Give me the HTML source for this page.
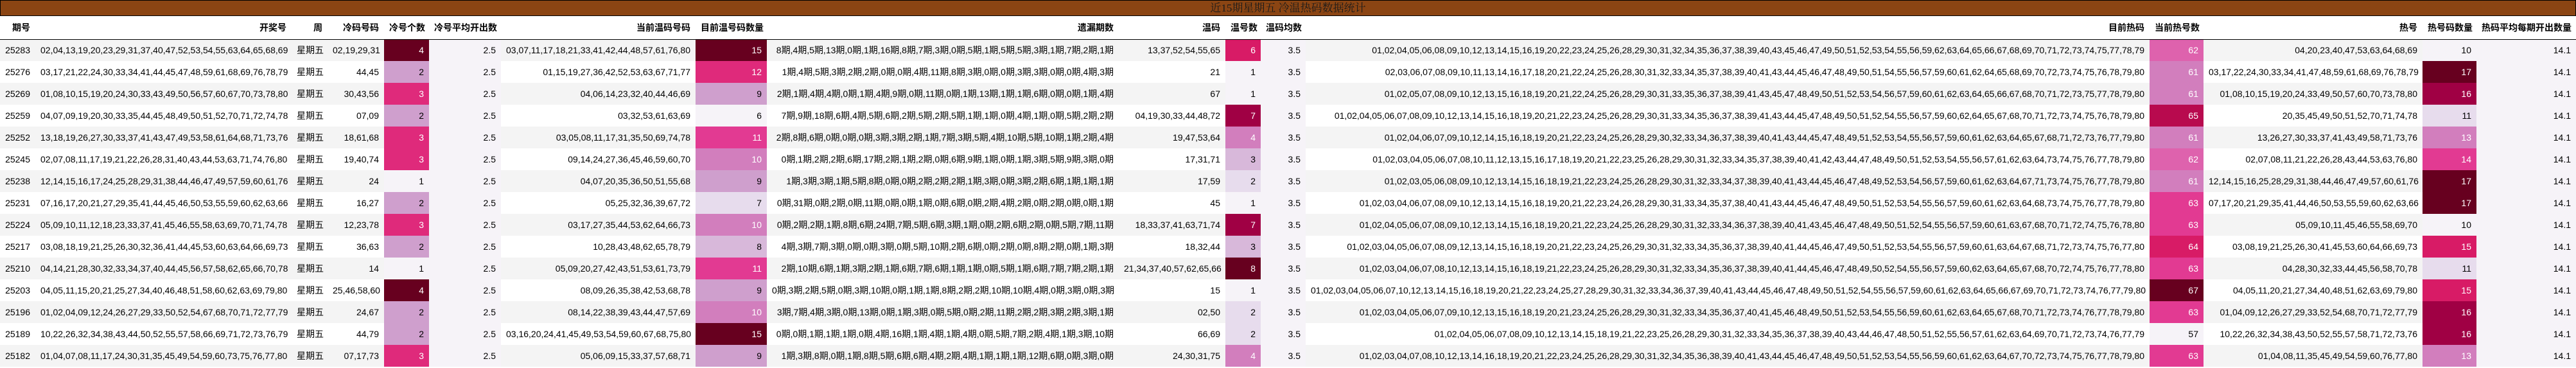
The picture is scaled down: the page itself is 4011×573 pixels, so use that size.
<!DOCTYPE html>
<html><head><meta charset="utf-8">
<style>
*{box-sizing:border-box;margin:0;padding:0}
body{width:4011px;height:573px;background:#fff;font-family:"Liberation Sans","Noto Sans CJK SC",sans-serif;font-size:14px;color:#000;overflow:hidden}
.title{height:25px;background:#8B4513;border:1px solid #000;text-align:center;font-size:17px;line-height:23px;color:#1a1a1a;font-family:"Liberation Serif","Noto Serif CJK SC",serif}
table{border-collapse:collapse;table-layout:fixed;width:4011px}
td,th{height:34px;padding:0 8px;text-align:right;white-space:nowrap;overflow:hidden}
th{height:36px;font-weight:bold;border-bottom:1px solid #000}
tbody tr:nth-child(odd){background:#f4f4f4}
tbody tr:nth-child(even){background:#fff}
.d0{background:#f6f3f8}
.d1{background:#e7dced}
.d2{background:#d8b8da}
.d3{background:#cf9fcd}
.d4{background:#d27ebd;color:#fff}
.d5{background:#de62ad;color:#fff}
.d6{background:#e23a92;color:#fff}
.d7{background:#df2a7b;color:#fff}
.d8{background:#d81b66;color:#fff}
.d9{background:#b80a4e;color:#fff}
.d10{background:#a00044;color:#fff}
.d11{background:#67001f;color:#fff}
</style></head><body>
<div class="title">近15期星期五 冷温热码数据统计</div>
<table>
<colgroup><col style="width:55px"><col style="width:399px"><col style="width:56px"><col style="width:88px"><col style="width:70px"><col style="width:112px"><col style="width:303px"><col style="width:111px"><col style="width:548px"><col style="width:166px"><col style="width:55px"><col style="width:70px"><col style="width:1314px"><col style="width:84px"><col style="width:341px"><col style="width:84px"><col style="width:155px"></colgroup>
<thead><tr><th>期号</th><th>开奖号</th><th>周</th><th>冷码号码</th><th>冷号个数</th><th>冷号平均开出数</th><th>当前温码号码</th><th>目前温号码数量</th><th>遗漏期数</th><th>温码</th><th>温号数</th><th>温码均数</th><th>目前热码</th><th>当前热号数</th><th>热号</th><th>热号码数量</th><th>热码平均每期开出数量</th></tr></thead>
<tbody>
<tr><td>25283</td><td>02,04,13,19,20,23,29,31,37,40,47,52,53,54,55,63,64,65,68,69</td><td>星期五</td><td>02,19,29,31</td><td class="d11">4</td><td class="d0">2.5</td><td>03,07,11,17,18,21,33,41,42,44,48,57,61,76,80</td><td class="d11">15</td><td>8期,4期,5期,13期,0期,1期,16期,8期,7期,3期,0期,5期,1期,5期,5期,3期,1期,7期,2期,1期</td><td>13,37,52,54,55,65</td><td class="d8">6</td><td class="d0">3.5</td><td>01,02,04,05,06,08,09,10,12,13,14,15,16,19,20,22,23,24,25,26,28,29,30,31,32,34,35,36,37,38,39,40,43,45,46,47,49,50,51,52,53,54,55,56,59,62,63,64,65,66,67,68,69,70,71,72,73,74,75,77,78,79</td><td class="d5">62</td><td>04,20,23,40,47,53,63,64,68,69</td><td class="d0">10</td><td class="d0">14.1</td></tr>
<tr><td>25276</td><td>03,17,21,22,24,30,33,34,41,44,45,47,48,59,61,68,69,76,78,79</td><td>星期五</td><td>44,45</td><td class="d3">2</td><td class="d0">2.5</td><td>01,15,19,27,36,42,52,53,63,67,71,77</td><td class="d7">12</td><td>1期,4期,5期,3期,2期,2期,0期,0期,4期,11期,8期,3期,0期,0期,3期,3期,0期,0期,4期,3期</td><td>21</td><td class="d0">1</td><td class="d0">3.5</td><td>02,03,06,07,08,09,10,11,13,14,16,17,18,20,21,22,24,25,26,28,30,31,32,33,34,35,37,38,39,40,41,43,44,45,46,47,48,49,50,51,54,55,56,57,59,60,61,62,64,65,68,69,70,72,73,74,75,76,78,79,80</td><td class="d4">61</td><td>03,17,22,24,30,33,34,41,47,48,59,61,68,69,76,78,79</td><td class="d11">17</td><td class="d0">14.1</td></tr>
<tr><td>25269</td><td>01,08,10,15,19,20,24,30,33,43,49,50,56,57,60,67,70,73,78,80</td><td>星期五</td><td>30,43,56</td><td class="d7">3</td><td class="d0">2.5</td><td>04,06,14,23,32,40,44,46,69</td><td class="d3">9</td><td>2期,1期,4期,4期,0期,1期,4期,9期,0期,11期,0期,1期,13期,1期,1期,6期,0期,0期,1期,4期</td><td>67</td><td class="d0">1</td><td class="d0">3.5</td><td>01,02,05,07,08,09,10,12,13,15,16,18,19,20,21,22,24,25,26,28,29,30,31,33,35,36,37,38,39,41,43,45,47,48,49,50,51,52,53,54,56,57,59,60,61,62,63,64,65,66,67,68,70,71,72,73,75,77,78,79,80</td><td class="d4">61</td><td>01,08,10,15,19,20,24,33,49,50,57,60,70,73,78,80</td><td class="d10">16</td><td class="d0">14.1</td></tr>
<tr><td>25259</td><td>04,07,09,19,20,30,33,35,44,45,48,49,50,51,52,70,71,72,74,78</td><td>星期五</td><td>07,09</td><td class="d3">2</td><td class="d0">2.5</td><td>03,32,53,61,63,69</td><td class="d0">6</td><td>7期,9期,18期,6期,4期,5期,6期,2期,5期,2期,5期,1期,1期,0期,4期,1期,0期,5期,2期,2期</td><td>04,19,30,33,44,48,72</td><td class="d10">7</td><td class="d0">3.5</td><td>01,02,04,05,06,07,08,09,10,12,13,14,15,16,18,19,20,21,22,23,24,25,26,28,29,30,31,33,34,35,36,37,38,39,41,43,44,45,47,48,49,50,51,52,54,55,56,57,59,60,62,64,65,67,68,70,71,72,73,74,75,76,78,79,80</td><td class="d9">65</td><td>20,35,45,49,50,51,52,70,71,74,78</td><td class="d1">11</td><td class="d0">14.1</td></tr>
<tr><td>25252</td><td>13,18,19,26,27,30,33,37,41,43,47,49,53,58,61,64,68,71,73,76</td><td>星期五</td><td>18,61,68</td><td class="d7">3</td><td class="d0">2.5</td><td>03,05,08,11,17,31,35,50,69,74,78</td><td class="d6">11</td><td>2期,8期,6期,0期,0期,0期,3期,3期,2期,1期,7期,3期,5期,4期,10期,5期,10期,1期,2期,4期</td><td>19,47,53,64</td><td class="d4">4</td><td class="d0">3.5</td><td>01,02,04,06,07,09,10,12,14,15,16,18,19,20,21,22,23,24,25,26,28,29,30,32,33,34,36,37,38,39,40,41,43,44,45,47,48,49,51,52,53,54,55,56,57,59,60,61,62,63,64,65,67,68,71,72,73,76,77,79,80</td><td class="d4">61</td><td>13,26,27,30,33,37,41,43,49,58,71,73,76</td><td class="d4">13</td><td class="d0">14.1</td></tr>
<tr><td>25245</td><td>02,07,08,11,17,19,21,22,26,28,31,40,43,44,53,63,71,74,76,80</td><td>星期五</td><td>19,40,74</td><td class="d7">3</td><td class="d0">2.5</td><td>09,14,24,27,36,45,46,59,60,70</td><td class="d4">10</td><td>0期,1期,2期,2期,6期,17期,2期,1期,2期,0期,6期,9期,1期,0期,1期,3期,5期,9期,3期,0期</td><td>17,31,71</td><td class="d2">3</td><td class="d0">3.5</td><td>01,02,03,04,05,06,07,08,10,11,12,13,15,16,17,18,19,20,21,22,23,25,26,28,29,30,31,32,33,34,35,37,38,39,40,41,42,43,44,47,48,49,50,51,52,53,54,55,56,57,61,62,63,64,73,74,75,76,77,78,79,80</td><td class="d5">62</td><td>02,07,08,11,21,22,26,28,43,44,53,63,76,80</td><td class="d6">14</td><td class="d0">14.1</td></tr>
<tr><td>25238</td><td>12,14,15,16,17,24,25,28,29,31,38,44,46,47,49,57,59,60,61,76</td><td>星期五</td><td>24</td><td class="d0">1</td><td class="d0">2.5</td><td>04,07,20,35,36,50,51,55,68</td><td class="d3">9</td><td>1期,3期,3期,1期,5期,8期,0期,0期,2期,2期,2期,1期,3期,0期,3期,2期,6期,1期,1期,1期</td><td>17,59</td><td class="d1">2</td><td class="d0">3.5</td><td>01,02,03,05,06,08,09,10,12,13,14,15,16,18,19,21,22,23,24,25,26,28,29,30,31,32,33,34,37,38,39,40,41,43,44,45,46,47,48,49,52,53,54,56,57,59,60,61,62,63,64,67,71,73,74,75,76,77,78,79,80</td><td class="d4">61</td><td>12,14,15,16,25,28,29,31,38,44,46,47,49,57,60,61,76</td><td class="d11">17</td><td class="d0">14.1</td></tr>
<tr><td>25231</td><td>07,16,17,20,21,27,29,35,41,44,45,46,50,53,55,59,60,62,63,66</td><td>星期五</td><td>16,27</td><td class="d3">2</td><td class="d0">2.5</td><td>05,25,32,36,39,67,72</td><td class="d1">7</td><td>0期,31期,0期,2期,0期,11期,0期,0期,1期,0期,6期,0期,2期,4期,2期,0期,2期,0期,0期,1期</td><td>45</td><td class="d0">1</td><td class="d0">3.5</td><td>01,02,03,04,06,07,08,09,10,12,13,14,15,16,18,19,20,21,22,23,24,26,28,29,30,31,33,34,35,37,38,40,41,43,44,45,46,47,48,49,50,51,52,53,54,55,56,57,59,60,61,62,63,64,68,73,74,75,76,77,78,79,80</td><td class="d6">63</td><td>07,17,20,21,29,35,41,44,46,50,53,55,59,60,62,63,66</td><td class="d11">17</td><td class="d0">14.1</td></tr>
<tr><td>25224</td><td>05,09,10,11,12,18,23,33,37,41,45,46,55,58,63,69,70,71,74,78</td><td>星期五</td><td>12,23,78</td><td class="d7">3</td><td class="d0">2.5</td><td>03,17,27,35,44,53,62,64,66,73</td><td class="d4">10</td><td>0期,2期,2期,1期,8期,6期,24期,7期,5期,6期,3期,1期,0期,2期,6期,2期,0期,5期,7期,11期</td><td>18,33,37,41,63,71,74</td><td class="d10">7</td><td class="d0">3.5</td><td>01,02,04,05,06,07,08,09,10,12,13,14,15,16,18,19,20,21,22,23,24,25,26,28,29,30,31,32,33,34,36,37,38,39,40,41,43,45,46,47,48,49,50,51,52,54,55,56,57,59,60,61,63,67,68,70,71,72,74,75,76,78,80</td><td class="d6">63</td><td>05,09,10,11,45,46,55,58,69,70</td><td class="d0">10</td><td class="d0">14.1</td></tr>
<tr><td>25217</td><td>03,08,18,19,21,25,26,30,32,36,41,44,45,53,60,63,64,66,69,73</td><td>星期五</td><td>36,63</td><td class="d3">2</td><td class="d0">2.5</td><td>10,28,43,48,62,65,78,79</td><td class="d2">8</td><td>4期,3期,7期,3期,0期,0期,3期,0期,5期,10期,2期,6期,0期,2期,0期,8期,2期,0期,1期,3期</td><td>18,32,44</td><td class="d2">3</td><td class="d0">3.5</td><td>01,02,03,04,05,06,07,08,09,12,13,14,15,16,18,19,20,21,22,23,24,25,26,29,30,31,32,33,34,35,36,37,38,39,40,41,44,45,46,47,49,50,51,52,53,54,55,56,57,59,60,61,63,64,67,68,71,72,73,74,75,76,77,80</td><td class="d8">64</td><td>03,08,19,21,25,26,30,41,45,53,60,64,66,69,73</td><td class="d8">15</td><td class="d0">14.1</td></tr>
<tr><td>25210</td><td>04,14,21,28,30,32,33,34,37,40,44,45,56,57,58,62,65,66,70,78</td><td>星期五</td><td>14</td><td class="d0">1</td><td class="d0">2.5</td><td>05,09,20,27,42,43,51,53,61,73,79</td><td class="d6">11</td><td>2期,10期,6期,1期,3期,2期,1期,6期,7期,6期,1期,1期,0期,5期,1期,6期,7期,7期,2期,1期</td><td>21,34,37,40,57,62,65,66</td><td class="d11">8</td><td class="d0">3.5</td><td>01,02,03,04,06,07,08,10,12,13,14,15,16,18,19,21,22,23,24,25,26,28,29,30,31,32,33,34,35,36,37,38,39,40,41,44,45,46,47,48,49,50,52,54,55,56,57,59,60,62,63,64,65,67,68,70,72,74,75,76,77,78,80</td><td class="d6">63</td><td>04,28,30,32,33,44,45,56,58,70,78</td><td class="d1">11</td><td class="d0">14.1</td></tr>
<tr><td>25203</td><td>04,05,11,15,20,21,25,27,34,40,46,48,51,58,60,62,63,69,79,80</td><td>星期五</td><td>25,46,58,60</td><td class="d11">4</td><td class="d0">2.5</td><td>08,09,26,35,38,42,53,68,78</td><td class="d3">9</td><td>0期,3期,2期,5期,0期,3期,10期,0期,1期,1期,8期,2期,2期,10期,10期,4期,0期,3期,0期,3期</td><td>15</td><td class="d0">1</td><td class="d0">3.5</td><td>01,02,03,04,05,06,07,10,12,13,14,15,16,18,19,20,21,22,23,24,25,27,28,29,30,31,32,33,34,36,37,39,40,41,43,44,45,46,47,48,49,50,51,52,54,55,56,57,59,60,61,62,63,64,65,66,67,69,70,71,72,73,74,76,77,79,80</td><td class="d11">67</td><td>04,05,11,20,21,27,34,40,48,51,62,63,69,79,80</td><td class="d8">15</td><td class="d0">14.1</td></tr>
<tr><td>25196</td><td>01,02,04,09,12,24,26,27,29,33,50,52,54,67,68,70,71,72,77,79</td><td>星期五</td><td>24,67</td><td class="d3">2</td><td class="d0">2.5</td><td>08,14,22,38,39,43,44,47,57,69</td><td class="d4">10</td><td>3期,7期,4期,3期,0期,13期,0期,1期,3期,0期,5期,0期,2期,11期,2期,2期,3期,2期,3期,1期</td><td>02,50</td><td class="d1">2</td><td class="d0">3.5</td><td>01,02,03,04,05,06,07,09,10,12,13,15,16,18,19,20,21,23,24,25,26,28,29,30,31,32,33,34,35,36,37,40,41,45,46,48,49,50,51,52,53,54,55,56,59,60,61,62,63,64,65,67,68,70,71,72,73,74,76,77,78,79,80</td><td class="d6">63</td><td>01,04,09,12,26,27,29,33,52,54,68,70,71,72,77,79</td><td class="d10">16</td><td class="d0">14.1</td></tr>
<tr><td>25189</td><td>10,22,26,32,34,38,43,44,50,52,55,57,58,66,69,71,72,73,76,79</td><td>星期五</td><td>44,79</td><td class="d3">2</td><td class="d0">2.5</td><td>03,16,20,24,41,45,49,53,54,59,60,67,68,75,80</td><td class="d11">15</td><td>0期,0期,1期,1期,1期,0期,4期,16期,1期,4期,1期,4期,0期,5期,7期,2期,4期,1期,3期,10期</td><td>66,69</td><td class="d1">2</td><td class="d0">3.5</td><td>01,02,04,05,06,07,08,09,10,12,13,14,15,18,19,21,22,23,25,26,28,29,30,31,32,33,34,35,36,37,38,39,40,43,44,46,47,48,50,51,52,55,56,57,61,62,63,64,69,70,71,72,73,74,76,77,79</td><td class="d0">57</td><td>10,22,26,32,34,38,43,50,52,55,57,58,71,72,73,76</td><td class="d10">16</td><td class="d0">14.1</td></tr>
<tr><td>25182</td><td>01,04,07,08,11,17,24,30,31,35,45,49,54,59,60,73,75,76,77,80</td><td>星期五</td><td>07,17,73</td><td class="d7">3</td><td class="d0">2.5</td><td>05,06,09,15,33,37,57,68,71</td><td class="d3">9</td><td>1期,3期,8期,0期,1期,8期,5期,6期,6期,4期,2期,4期,1期,1期,1期,12期,6期,0期,3期,0期</td><td>24,30,31,75</td><td class="d4">4</td><td class="d0">3.5</td><td>01,02,03,04,07,08,10,12,13,14,16,18,19,20,21,22,23,24,25,26,28,29,30,31,32,34,35,36,38,39,40,41,43,44,45,46,47,48,49,50,51,52,53,54,55,56,59,60,61,62,63,64,67,70,72,73,74,75,76,77,78,79,80</td><td class="d6">63</td><td>01,04,08,11,35,45,49,54,59,60,76,77,80</td><td class="d4">13</td><td class="d0">14.1</td></tr>
</tbody></table>
</body></html>
